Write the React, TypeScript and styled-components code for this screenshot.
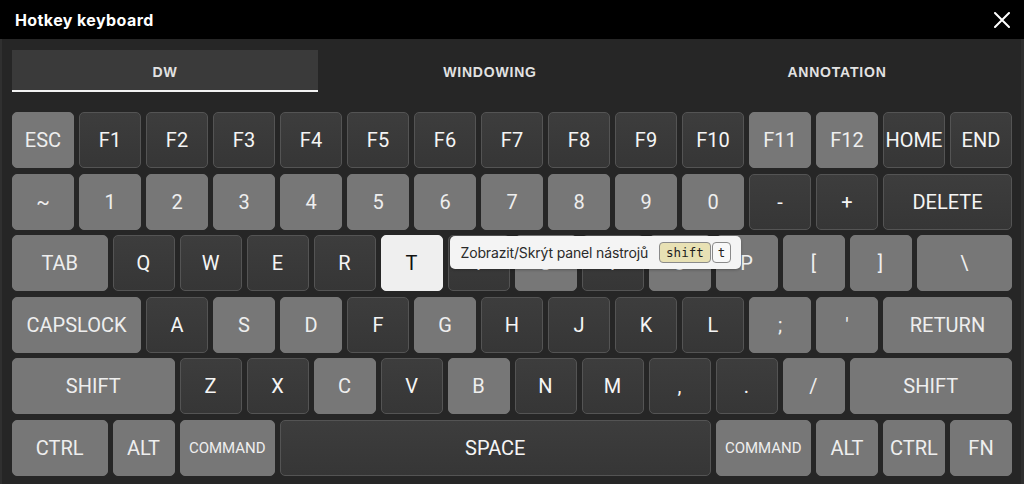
import styled, { createGlobalStyle } from "styled-components";

type Tone = "dark" | "light" | "active";

interface KeyDef {
	label: string;
	u?: number;
	tone: Tone;
	small?: boolean;
	tip?: boolean;
}

const d = (label: string, u = 1): KeyDef => ({ label, u, tone: "dark" });
const l = (label: string, u = 1): KeyDef => ({ label, u, tone: "light" });

const ROWS: KeyDef[][] = [
	[
		l("ESC"),
		d("F1"),
		d("F2"),
		d("F3"),
		d("F4"),
		d("F5"),
		d("F6"),
		d("F7"),
		d("F8"),
		d("F9"),
		d("F10"),
		l("F11"),
		l("F12"),
		d("HOME"),
		d("END"),
	],
	[
		l("~"),
		l("1"),
		l("2"),
		l("3"),
		l("4"),
		l("5"),
		l("6"),
		l("7"),
		l("8"),
		l("9"),
		l("0"),
		d("-"),
		d("+"),
		d("DELETE", 2),
	],
	[
		l("TAB", 1.5),
		d("Q"),
		d("W"),
		d("E"),
		d("R"),
		{ label: "T", u: 1, tone: "active", tip: true },
		d("Y"),
		l("U"),
		d("I"),
		l("O"),
		l("P"),
		l("["),
		l("]"),
		l("\\", 1.5),
	],
	[
		l("CAPSLOCK", 2),
		d("A"),
		l("S"),
		l("D"),
		d("F"),
		l("G"),
		d("H"),
		d("J"),
		d("K"),
		d("L"),
		l(";"),
		l("'"),
		l("RETURN", 2),
	],
	[
		l("SHIFT", 2.5),
		d("Z"),
		d("X"),
		l("C"),
		d("V"),
		l("B"),
		d("N"),
		d("M"),
		d(","),
		d("."),
		l("/"),
		l("SHIFT", 2.5),
	],
	[
		l("CTRL", 1.5),
		l("ALT"),
		{ label: "COMMAND", u: 1.5, tone: "light", small: true },
		d("SPACE", 6.5),
		{ label: "COMMAND", u: 1.5, tone: "light", small: true },
		l("ALT"),
		l("CTRL"),
		l("FN"),
	],
];

const TABS = ["DW", "WINDOWING", "ANNOTATION"];

const GlobalStyle = createGlobalStyle`
	html, body {
		margin: 0;
		background: #262626;
	}
	* {
		box-sizing: border-box;
	}
`;

const Dialog = styled.div`
	width: 1024px;
	height: 484px;
	display: flex;
	flex-direction: column;
	background: #262626;
	overflow: hidden;
`;

const Header = styled.div`
	height: 39px;
	flex: 0 0 39px;
	background: #000;
	display: flex;
	align-items: center;
	justify-content: space-between;
	padding: 0 14px 0 15px;
`;

const Title = styled.h2`
	margin: 0;
	font-family: Inter, "Noto Sans", sans-serif;
	font-size: 16px;
	font-weight: 700;
	color: #fff;
	letter-spacing: 0.4px;
`;

const CloseButton = styled.button`
	border: 0;
	background: none;
	padding: 0;
	width: 16px;
	height: 16px;
	display: flex;
	cursor: pointer;
`;

const Body = styled.div`
	flex: 1;
	padding: 11px 9px 0 10px;
	border-left: 2px solid #303030;
	border-right: 3px solid #2f2f2f;
`;

const TabBar = styled.div`
	display: grid;
	grid-template-columns: 306px 344px 1fr;
	margin-bottom: 20px;
`;

const Tab = styled.div<{ $active?: boolean }>`
	height: 42px;
	padding-top: 3px;
	display: flex;
	align-items: center;
	justify-content: center;
	font-family: "Liberation Sans", Arial, sans-serif;
	font-weight: 700;
	font-size: 14px;
	letter-spacing: 0.8px;
	color: #e2e2e2;
	background: ${(p) => (p.$active ? "#3a3a3a" : "transparent")};
	border-bottom: 2px solid ${(p) => (p.$active ? "#f2f2f2" : "transparent")};
`;

const Keyboard = styled.div`
	width: 1000px;
	display: flex;
	flex-direction: column;
	gap: 5.6px;
`;

const Row = styled.div`
	display: flex;
	gap: 5px;
`;

const KeyCap = styled.div<{ $u: number; $tone: Tone; $small?: boolean }>`
	position: relative;
	flex: 0 0 calc(${(p) => p.$u} * 67px - 5px);
	height: 56px;
	border-radius: 5px;
	display: flex;
	align-items: center;
	justify-content: center;
	font-family: Roboto, "Liberation Sans", sans-serif;
	font-size: ${(p) => (p.$small ? "15px" : "20px")};
	white-space: nowrap;
	color: ${(p) => (p.$tone === "active" ? "#111" : p.$tone === "light" ? "#eee" : "#f5f5f5")};
	background: ${(p) =>
		p.$tone === "active"
			? "#efefef"
			: p.$tone === "light"
				? "#777777"
				: "linear-gradient(180deg, #3d3d3d 0%, #363636 100%)"};
	border: 1px solid
		${(p) => (p.$tone === "dark" ? "#545454" : p.$tone === "active" ? "#efefef" : "#777777")};
`;

const Tooltip = styled.div`
	position: absolute;
	left: calc(100% + 8px);
	top: 0;
	height: 33px;
	padding: 0 10px 0 11px;
	display: flex;
	align-items: center;
	gap: 1px;
	background: #f4f4f4;
	border-radius: 5px;
	box-shadow: 0 1px 3px rgba(0, 0, 0, 0.25);
	z-index: 2;
`;

const TipText = styled.span`
	font-family: Inter, "Noto Sans", sans-serif;
	font-size: 14px;
	color: #2a2a2a;
	margin-right: 10px;
	letter-spacing: -0.15px;
`;

const Kbd = styled.kbd<{ $accent?: boolean }>`
	height: 21px;
	display: inline-flex;
	align-items: center;
	padding: 0 ${(p) => (p.$accent ? "6px" : "5px")};
	border: 1px solid #8a8a8a;
	border-radius: 4px;
	font-family: "DejaVu Sans Mono", "Liberation Mono", monospace;
	font-size: 12.5px;
	color: #1e1e1e;
	background: ${(p) => (p.$accent ? "#e8e1b4" : "#f8f8f8")};
`;

const CloseIcon = () => (
	<svg width="16" height="16" viewBox="0 0 16 16">
		<path d="M1 1 L15 15 M15 1 L1 15" stroke="#fff" strokeWidth="2" strokeLinecap="round" />
	</svg>
);

export default function App() {
	return (
		<>
			<GlobalStyle />
			<Dialog>
				<Header>
					<Title>Hotkey keyboard</Title>
					<CloseButton aria-label="close">
						<CloseIcon />
					</CloseButton>
				</Header>
				<Body>
					<TabBar>
						{TABS.map((t, i) => (
							<Tab key={t} $active={i === 0}>
								{t}
							</Tab>
						))}
					</TabBar>
					<Keyboard>
						{ROWS.map((row, r) => (
							<Row key={r}>
								{row.map((k, i) => (
									<KeyCap key={i} $u={k.u ?? 1} $tone={k.tone} $small={k.small}>
										{k.label}
										{k.tip && (
											<Tooltip>
												<TipText>Zobrazit/Skrýt panel nástrojů</TipText>
												<Kbd $accent>shift</Kbd>
												<Kbd>t</Kbd>
											</Tooltip>
										)}
									</KeyCap>
								))}
							</Row>
						))}
					</Keyboard>
				</Body>
			</Dialog>
		</>
	);
}
